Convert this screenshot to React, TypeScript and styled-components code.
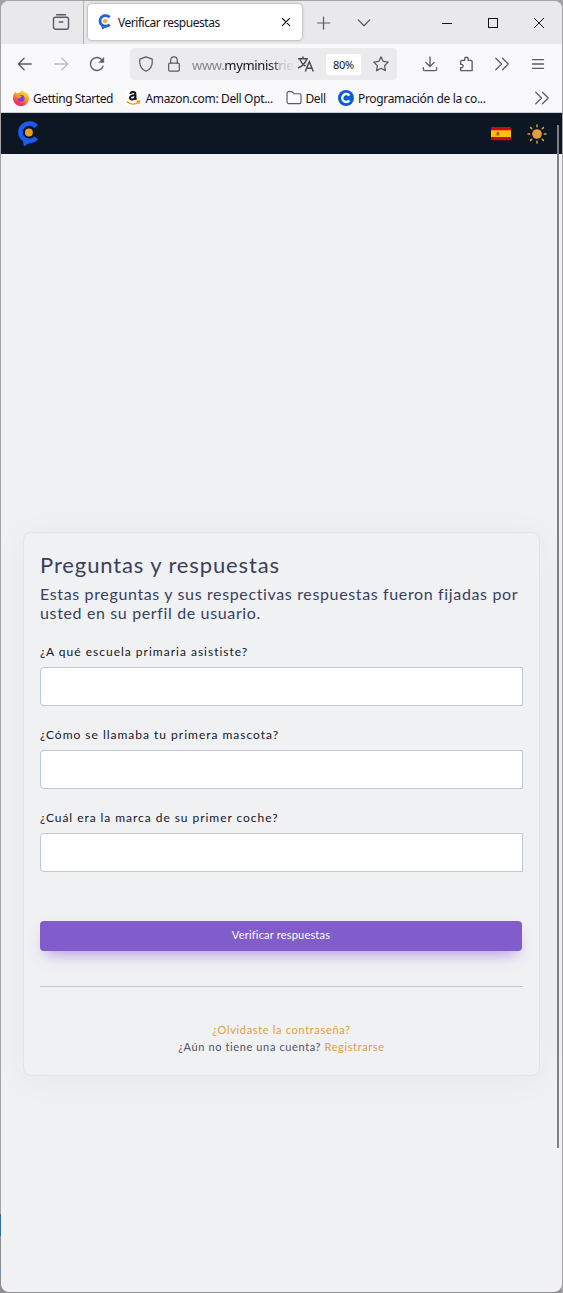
import React from "react";
import styled, { createGlobalStyle } from "styled-components";

const Global = createGlobalStyle`
  * { box-sizing: border-box; }
  html, body { margin: 0; background: #8e8e92; }
`;

const Desktop = styled.div`
  width: 563px;
  height: 1293px;
  padding: 1px;
  background:
    linear-gradient(#a3a3a6, #a3a3a6) right / 2px 100% no-repeat,
    linear-gradient(#a3a3a6 0 1214px, #2f6f9d 1214px 1236px, #8e8e90 1236px 1269px, #7790b5 1269px 1276px, #8e8e90 1276px);
`;
const Window = styled.div`
  display: flex;
  flex-direction: column;
  width: 561px;
  height: 1291px;
  border-radius: 8px;
  overflow: hidden;
  background: #f0f1f3;
  font-family: "Noto Sans", sans-serif;
  font-size: 12px;
  color: #15141a;
`;
const TabBar = styled.div`
  display: flex;
  height: 43px;
  flex: none;
  background: #e9e9ec;
  svg { flex: none; }
`;
const FirefoxView = styled.div`
  width: 83px;
  border-right: 1px solid #b0b0b5;
  padding: 12px 0 0 51px;
`;
const Tab = styled.div`
  display: flex;
  align-items: center;
  width: 214px;
  height: 36px;
  margin: 3px 0 0 4px;
  padding: 0 10px 0 9px;
  border-radius: 4px;
  background: #fff;
  box-shadow: 0 0 3px rgba(0, 0, 0, 0.4);
`;
const Label = styled.span<{ $spacing?: number; $gap?: number; $size?: number }>`
  white-space: nowrap;
  line-height: 16px;
  padding-top: 1px;
  font-size: ${(p) => p.$size ?? 12}px;
  margin-left: ${(p) => p.$gap ?? 0}px;
  letter-spacing: ${(p) => p.$spacing ?? 0}px;
`;
const TabTitle = styled(Label)`
  flex: 1;
`;
const TabTools = styled.div`
  display: flex;
  align-items: center;
  gap: 25px;
  padding-left: 13px;
  height: 43px;
`;
const WindowControls = styled.div`
  display: flex;
  flex: 1;
  justify-content: flex-end;
  align-items: center;
  gap: 36px;
  padding-right: 18px;
  height: 43px;
`;
const NavBar = styled.div`
  display: flex;
  align-items: center;
  flex: none;
  height: 40px;
  background: #f9f9fb;
  padding: 0 16px;
`;
const NavGroup = styled.div<{ $gap: number }>`
  display: flex;
  align-items: center;
  gap: ${(p) => p.$gap}px;
`;
const UrlBar = styled.div`
  display: flex;
  align-items: center;
  width: 267px;
  height: 32px;
  margin: 0 25px 0 25px;
  padding: 0 8px;
  border-radius: 4px;
  background: #ebebee;
  svg { flex: none; }
`;
const Url = styled.div`
  flex: none;
  width: 101px;
  padding-top: 1px;
  margin: 0 4px 0 10px;
  white-space: nowrap;
  font-size: 13px;
  line-height: 18px;
  letter-spacing: -0.33px;
  color: #85858b;
  mask-image: linear-gradient(90deg, #000 75%, transparent 103%);
  b { font-weight: 400; color: #15141a; }
`;
const Zoom = styled.div`
  display: flex;
  flex: none;
  align-items: center;
  justify-content: center;
  width: 35px;
  height: 21px;
  margin: 0 12px 0 11px;
  padding-top: 1px;
  border-radius: 3px;
  background: #fff;
  font-size: 11px;
  letter-spacing: -0.3px;
`;
const Bookmarks = styled.div`
  display: flex;
  align-items: center;
  flex: none;
  height: 29px;
  padding: 0 12px 0 12px;
  background: #f9f9fb;
  border-bottom: 1px solid #cfcfd3;
`;
const Bookmark = styled.div<{ $width: number }>`
  display: flex;
  align-items: center;
  width: ${(p) => p.$width}px;
  svg { flex: none; }
`;
const Spacer = styled.div`
  flex: 1;
`;
const SiteHeader = styled.header`
  display: flex;
  align-items: center;
  justify-content: space-between;
  flex: none;
  height: 41px;
  padding: 0 15px 0 15px;
  background: #0d1623;
`;
const Page = styled.main`
  position: relative;
  flex: 1;
  padding: 378px 22px 0 22px;
  font-family: Lato, sans-serif;
`;
const ScrollThumb = styled.div`
  position: absolute;
  right: 3px;
  top: -29px;
  width: 2px;
  height: 1023px;
  background: #808084;
`;
const Card = styled.section`
  height: 544px;
  padding: 17px 16px 0;
  border: 1px solid #e0e4ed;
  border-radius: 8px;
  background: #f0f1f3;
  box-shadow: 0 4px 32px rgba(50, 50, 80, 0.05);
`;
const Title = styled.h1`
  margin: 0;
  font-size: 22px;
  font-weight: 400;
  line-height: 30px;
  letter-spacing: 0.88px;
  color: #3b3f5c;
`;
const Intro = styled.p`
  margin: 4px 0 0;
  font-size: 16px;
  line-height: 19px;
  letter-spacing: 0.64px;
  white-space: nowrap;
  color: #3b3f5c;
`;
const Fields = styled.div`
  padding-top: 21px;
`;
const Field = styled.label`
  display: block;
  height: 82.9px;
`;
const Question = styled.span<{ $spacing: number }>`
  display: block;
  height: 24px;
  font-size: 12px;
  line-height: 18px;
  letter-spacing: ${(p) => p.$spacing}px;
  color: #15151d;
`;
const Input = styled.input`
  display: block;
  width: 483px;
  height: 39px;
  border: 1px solid #bfc7d1;
  border-radius: 4px 0 0 4px;
  background: #fff;
  outline: none;
`;
const Submit = styled.button`
  display: block;
  width: 482px;
  height: 30px;
  margin: 29px 0 0;
  padding: 0 0 2px;
  border: 0;
  border-radius: 4px;
  background: #805dca;
  color: #fff;
  font: 400 11px/20px Lato, sans-serif;
  letter-spacing: 0.2px;
  box-shadow: 0 8px 16px -6px rgba(128, 73, 212, 0.6);
`;
const Divider = styled.hr`
  width: 483px;
  margin: 35px 0 34px;
  border: 0;
  border-top: 1px solid #c5c6cc;
`;
const Footer = styled.div<{ $spacing: number }>`
  text-align: center;
  font-size: 11px;
  line-height: 17px;
  letter-spacing: ${(p) => p.$spacing}px;
  color: #515365;
`;
const Link = styled.a`
  color: #e2a03f;
`;

const Icon = ({ size = 18, color = "#5b5b66", width = 1.3, children }: { size?: number; color?: string; width?: number; children: React.ReactNode }) => (
  <svg width={size} height={size} viewBox="0 0 18 18" fill="none" stroke={color} strokeWidth={width} strokeLinecap="round" strokeLinejoin="round">
    {children}
  </svg>
);

const Logo = ({ w, h, dot, stroke }: { w: number; h: number; dot: string; stroke: string }) => (
  <svg width={w} height={h} viewBox="0 0 22 26">
    <path d="M20.200 5.400A9 8.700 0 1 0 20.200 17" fill="none" stroke={stroke} strokeWidth="4.600" />
    <path d="M6.500 18 8 25.200 15.500 20.800Z" fill={stroke} />
    <circle cx="12.900" cy="11.500" r="3.900" fill={dot} />
  </svg>
);

const Chevrons = () => (
  <Icon size={16} width={1.4}><path d="M2 2.500L8.500 9 2 15.500M9.500 2.500L16 9l-6.500 6.500" /></Icon>
);

const Firefox = () => (
  <svg width="16" height="16" viewBox="0 0 16 16">
    <defs>
      <linearGradient id="fx" x1="0.8" y1="0.1" x2="0.3" y2="1">
        <stop offset="0" stopColor="#ffdf3d" />
        <stop offset="0.45" stopColor="#ff9128" />
        <stop offset="0.8" stopColor="#ff3750" />
        <stop offset="1" stopColor="#e9208c" />
      </linearGradient>
    </defs>
    <path d="M9.3 0c1.4 1 2 2.2 2.2 3.1.6-.2 1-.7 1.1-1.1C14.7 3.6 16 5.8 16 8.2 16 12.700 12.400 16 8 16S0 12.600 0 8.200C0 5.600.9 3.600 2.500 1.600l.5 2 2-.7C6.500 2.700 8.300 2 9.300 0Z" fill="url(#fx)" />
    <circle cx="8.100" cy="8.400" r="3.400" fill="#7542e5" />
    <path d="M3 5c2-.9 3.400-.4 4.200.8l1.600.5c-.3 1.300-2 1-2.400 2.100C4.500 8.400 3.200 7 3 5Z" fill="#ff9a2d" />
  </svg>
);

const Amazon = () => (
  <svg width="16" height="16" viewBox="0 0 16 16">
    <rect width="16" height="16" rx="1" fill="#fff" />
    <path d="M5.300 3.900C5.700 1.500 10.400 1 10.400 4v4.300l1 1.400M10.100 5.300C7 5.100 5 6 5 7.900c0 2.300 4.400 2.200 5.100-.5" fill="none" stroke="#111" strokeWidth="2" />
    <path d="M1.500 11.500c4 3.400 9 3.300 12 .8M11.500 11.300l3-.2-.6 2.700" fill="none" stroke="#ff9900" strokeWidth="1.400" />
  </svg>
);

const Spain = () => (
  <svg width="20" height="14" viewBox="0 0 20 14">
    <rect width="20" height="13.300" rx="1.300" fill="#c60b1e" />
    <rect y="3.300" width="20" height="6.700" fill="#ffc400" />
    <path d="M4.600 5.300h1v3.500h-1zM8 5.300h1v3.500H8z" fill="#c99a3b" />
    <rect x="5.700" y="4.700" width="2.200" height="4" rx="1.100" fill="#ad5121" />
  </svg>
);

const Sun = () => (
  <svg width="20" height="20" viewBox="0 0 20 20" stroke="#e2a03f" strokeWidth="1.500" strokeLinecap="round">
    <circle cx="10" cy="10" r="4.800" fill="#e2a03f" stroke="none" />
    <path d="M10 1v1.700M10 17.300V19M1 10h1.700M17.300 10H19M3.600 3.600l1.200 1.200M15.200 15.200l1.200 1.200M3.600 16.400l1.200-1.200M15.200 4.800l1.200-1.200" />
  </svg>
);

const questions = [
  { text: "¿A qué escuela primaria asististe?", spacing: 1 },
  { text: "¿Cómo se llamaba tu primera mascota?", spacing: 0.99 },
  { text: "¿Cuál era la marca de su primer coche?", spacing: 0.95 },
];

export default function App() {
  return (
    <Desktop>
      <Global />
      <Window>
        <TabBar>
          <FirefoxView>
            <Icon width={1.4}>
              <path d="M4.500 1.700h9" />
              <rect x="1.500" y="4.200" width="15" height="12" rx="2" />
              <path d="M7.200 9h3.600" />
            </Icon>
          </FirefoxView>
          <Tab>
            <Logo w={14} h={16} dot="#f6b341" stroke="#2460e8" />
            <TabTitle $gap={7} $spacing={-0.46}>Verificar respuestas</TabTitle>
            <Icon size={12} color="#15141a" width={1.9}><path d="M3.500 3.500l11 11M14.500 3.500l-11 11" /></Icon>
          </Tab>
          <TabTools>
            <Icon size={16} width={1.4}><path d="M9.600 2.500v13.500M3 9h13.500" /></Icon>
            <Icon size={16} width={1.5}><path d="M2.500 5.500L9 12l6.500-6.500" /></Icon>
          </TabTools>
          <WindowControls>
            <svg width="10" height="10"><path d="M0 5.500h10" stroke="#15141a" /></svg>
            <svg width="10" height="10"><rect x="0.500" y="0.500" width="9" height="9" fill="none" stroke="#15141a" /></svg>
            <svg width="10" height="10"><path d="M0 0l10 10M10 0L0 10" stroke="#15141a" /></svg>
          </WindowControls>
        </TabBar>
        <NavBar>
          <NavGroup $gap={20}>
            <Icon size={16} width={1.5}><path d="M16 9H1.500M8 2.500L1.500 9 8 15.500" /></Icon>
            <Icon size={16} width={1.5} color="#bdbdc2"><path d="M2 9h14.500M10 2.500L16.500 9 10 15.500" /></Icon>
            <Icon size={16} width={1.5}>
              <path d="M15.800 11.500A7.300 7.300 0 1 1 14.600 4.400" />
              <path d="M16.700 1.800v5.500h-5.500z" fill="#5b5b66" strokeWidth="0.500" />
            </Icon>
          </NavGroup>
          <UrlBar>
            <NavGroup $gap={12}>
              <Icon size={16} width={1.4}><path d="M9 1l7 2.600v3.600c0 4.600-3 8-7 10-4-2-7-5.400-7-10V3.600z" /></Icon>
              <Icon size={16} width={1.4}><rect x="3" y="8" width="12" height="9" rx="1.500" /><path d="M5.300 8V4.700a3.700 3.700 0 0 1 7.400 0V8" /></Icon>
            </NavGroup>
            <Url>www.<b>myminist</b>rie</Url>
            <svg width="18" height="16" viewBox="0 0 18 16" fill="none" stroke="#4d4d57" strokeWidth="1.500">
              <path d="M1 2.800h10M6 .5v2.300M3 2.800c1 4.200 3.500 6 5.500 7.200M9.700 2.800C8.500 7.500 5 10.500 1 12M8.300 15.500L12.300 5.800l4 9.700M9.500 12.200h5.600" />
            </svg>
            <Zoom>80%</Zoom>
            <Icon size={16} width={1.4}><path d="M9 1l2.500 5.100 5.600.8-4.100 4 1 5.600-5-2.700-5 2.700 1-5.600-4.100-4 5.600-.8z" /></Icon>
          </UrlBar>
          <NavGroup $gap={20}>
            <Icon size={16} width={1.5}><path d="M9 1v10.700M4.300 7.200L9 11.900l4.700-4.700M1.500 13v1.600c0 1 .8 1.900 1.900 1.900h11.200c1 0 1.900-.8 1.900-1.900V13" /></Icon>
            <Icon size={16} width={1.5}><path d="M3 16.500V13c3.700.7 3.700-4.200 0-3.500V6.300c0-.8.500-1.300 1.300-1.300h3.200V3.400c0-2.600 3.900-2.600 3.900 0V5h3.200c.8 0 1.300.5 1.300 1.300v10.200z" /></Icon>
            <Chevrons />
            <Icon size={16} width={1.5}><path d="M2.700 4h12.500M2.700 9h12.500M2.700 14h12.500" /></Icon>
          </NavGroup>
        </NavBar>
        <Bookmarks>
          <Bookmark $width={112}><Firefox /><Label $gap={4} $spacing={-0.42}>Getting Started</Label></Bookmark>
          <Bookmark $width={161}><Amazon /><Label $gap={4.5} $spacing={-0.35}>Amazon.com: Dell Opt...</Label></Bookmark>
          <Bookmark $width={52}>
            <Icon size={16} width={1.3}><path d="M1.200 13.500v-10c0-1 .8-1.700 1.700-1.700h3.700l2.200 2.400h6.300c1 0 1.800.8 1.800 1.700v7.600c0 1-.8 1.800-1.800 1.800H3c-1 0-1.800-.8-1.800-1.800z" /></Icon>
            <Label $gap={3.5} $spacing={-0.4}>Dell</Label>
          </Bookmark>
          <Bookmark $width={160}>
            <svg width="16" height="16" viewBox="0 0 16 16">
              <circle cx="8" cy="8" r="8" fill="#0a5bd8" />
              <path d="M11.400 5.600A4 4 0 1 0 11.400 10.400" fill="none" stroke="#fff" strokeWidth="2.400" />
            </svg>
            <Label $gap={4} $spacing={-0.33}>Programación de la co...</Label>
          </Bookmark>
          <Spacer />
          <Chevrons />
        </Bookmarks>
        <SiteHeader>
          <Logo w={22} h={26} dot="#e99c2c" stroke="#1b5bf5" />
          <NavGroup $gap={16}><Spain /><Sun /></NavGroup>
        </SiteHeader>
        <Page>
          <ScrollThumb />
          <Card>
            <Title>Preguntas y respuestas</Title>
            <Intro>Estas preguntas y sus respectivas respuestas fueron fijadas por<br />usted en su perfil de usuario.</Intro>
            <Fields>
              {questions.map((q) => (
                <Field key={q.text}>
                  <Question $spacing={q.spacing}>{q.text}</Question>
                  <Input />
                </Field>
              ))}
            </Fields>
            <Submit>Verificar respuestas</Submit>
            <Divider />
            <Footer $spacing={0.67}><Link>¿Olvidaste la contraseña?</Link></Footer>
            <Footer $spacing={0.62}>¿Aún no tiene una cuenta? <Link>Registrarse</Link></Footer>
          </Card>
        </Page>
      </Window>
    </Desktop>
  );
}
